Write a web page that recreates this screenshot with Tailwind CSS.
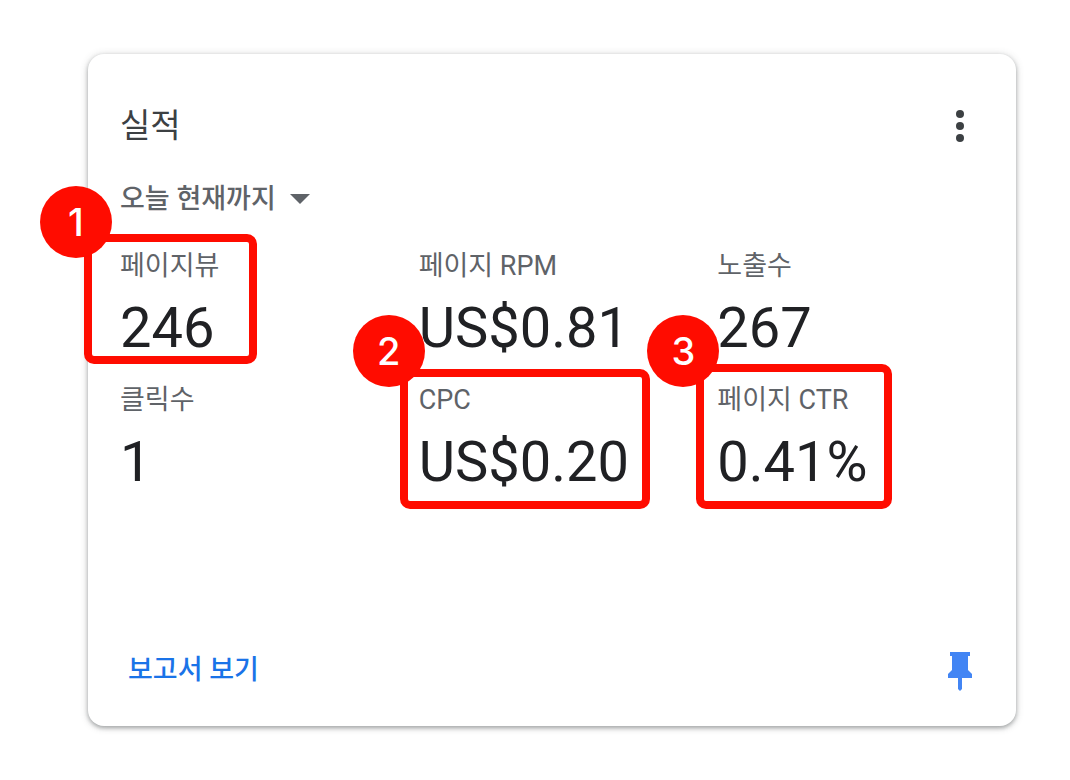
<!DOCTYPE html>
<html lang="ko">
<head>
    <meta charset="UTF-8">
    <meta name="viewport" content="width=device-width, initial-scale=1.0">
    <title>실적</title>
    <script src="https://cdn.jsdelivr.net/npm/@tailwindcss/browser@4"></script>
</head>
<body class="bg-white font-[Roboto,'Noto_Sans_CJK_KR',sans-serif]">
    <main class="pl-[88px] pr-[54px] py-[54px]">
        <section class="bg-white rounded-2xl shadow-[0_2px_4px_rgba(60,64,67,0.4),0_1px_8px_rgba(60,64,67,0.2)] pl-8 pt-12 pb-8">
            <!-- Header -->
            <div class="flex items-center justify-between h-12 pr-8">
                <h1 class="text-[33px] leading-[48px] text-[#3c4043]">실적</h1>
                <button type="button" aria-label="메뉴" class="w-12 h-12">
                    <svg class="w-12 h-12" viewBox="0 0 48 48" fill="#3c4043">
                        <circle cx="24" cy="12" r="4"/>
                        <circle cx="24" cy="24" r="4"/>
                        <circle cx="24" cy="36" r="4"/>
                    </svg>
                </button>
            </div>

            <!-- Date range -->
            <div class="relative w-fit h-12 mt-6">
                <select aria-label="기간" class="appearance-none bg-transparent h-12 pt-[2px] pr-[34px] text-[27px] font-medium text-[#5f6368]">
                    <option>오늘 현재까지</option>
                </select>
                <svg class="absolute right-0 top-5 w-5 h-[10px] pointer-events-none" viewBox="0 0 20 10" fill="#5f6368">
                    <path d="M0 0h20L10 10z"/>
                </svg>
            </div>

            <!-- Metrics -->
            <dl class="grid grid-cols-3 gap-y-[22px] mt-[26px]">
                <div class="relative">
                    <dt class="text-[27px] leading-9 text-[#5f6368]">페이지뷰</dt>
                    <dd class="mt-3 text-[56px] leading-[64px] text-[#202124]">246</dd>
                    <div class="absolute -left-9 -top-[14px] w-[173px] h-[130px] border-8 border-[#ff0c00] rounded-[10px]"></div>
                    <span class="absolute -left-20 -top-[62px] size-[72px] flex items-center justify-center rounded-full bg-[#ff0c00] text-white text-[38px] font-medium font-[Inter,sans-serif]">1</span>
                </div>
                <div>
                    <dt class="text-[27px] leading-9 text-[#5f6368]">페이지 RPM</dt>
                    <dd class="mt-3 text-[56px] leading-[64px] text-[#202124]">US$0.81</dd>
                </div>
                <div>
                    <dt class="text-[27px] leading-9 text-[#5f6368]">노출수</dt>
                    <dd class="mt-3 text-[56px] leading-[64px] text-[#202124]">267</dd>
                </div>
                <div>
                    <dt class="text-[27px] leading-9 text-[#5f6368]">클릭수</dt>
                    <dd class="mt-3 text-[56px] leading-[64px] text-[#202124]">1</dd>
                </div>
                <div class="relative">
                    <dt class="text-[27px] leading-9 text-[#5f6368]">CPC</dt>
                    <dd class="mt-3 text-[56px] leading-[64px] text-[#202124]">US$0.20</dd>
                    <div class="absolute -left-[19px] -top-[13px] w-[250px] h-[140px] border-8 border-[#ff0c00] rounded-[10px]"></div>
                    <span class="absolute -left-[66px] -top-[67px] size-[72px] flex items-center justify-center rounded-full bg-[#ff0c00] text-white text-[38px] font-medium font-[Inter,sans-serif]">2</span>
                </div>
                <div class="relative">
                    <dt class="text-[27px] leading-9 text-[#5f6368]">페이지 CTR</dt>
                    <dd class="mt-3 text-[56px] leading-[64px] text-[#202124]">0.41%</dd>
                    <div class="absolute -left-[21px] -top-[18px] w-[196px] h-[145px] border-8 border-[#ff0c00] rounded-[10px]"></div>
                    <span class="absolute -left-[70px] -top-[67px] size-[72px] flex items-center justify-center rounded-full bg-[#ff0c00] text-white text-[38px] font-medium font-[Inter,sans-serif]">3</span>
                </div>
            </dl>

            <!-- Footer -->
            <div class="flex items-center justify-between mt-[152px] pl-2 pr-8">
                <a href="#" class="text-[27px] leading-[48px] font-medium text-[#1a73e8]">보고서 보기</a>
                <button type="button" aria-label="고정" class="w-12 h-12">
                    <svg class="w-12 h-12" viewBox="0 0 48 48" fill="#4285f4">
                        <path d="M14 6h20v4h-2v14l4 4v4H26v11l-2 2-2-2V32H12v-4l4-4V10h-2z"/>
                    </svg>
                </button>
            </div>
        </section>
    </main>
</body>
</html>
